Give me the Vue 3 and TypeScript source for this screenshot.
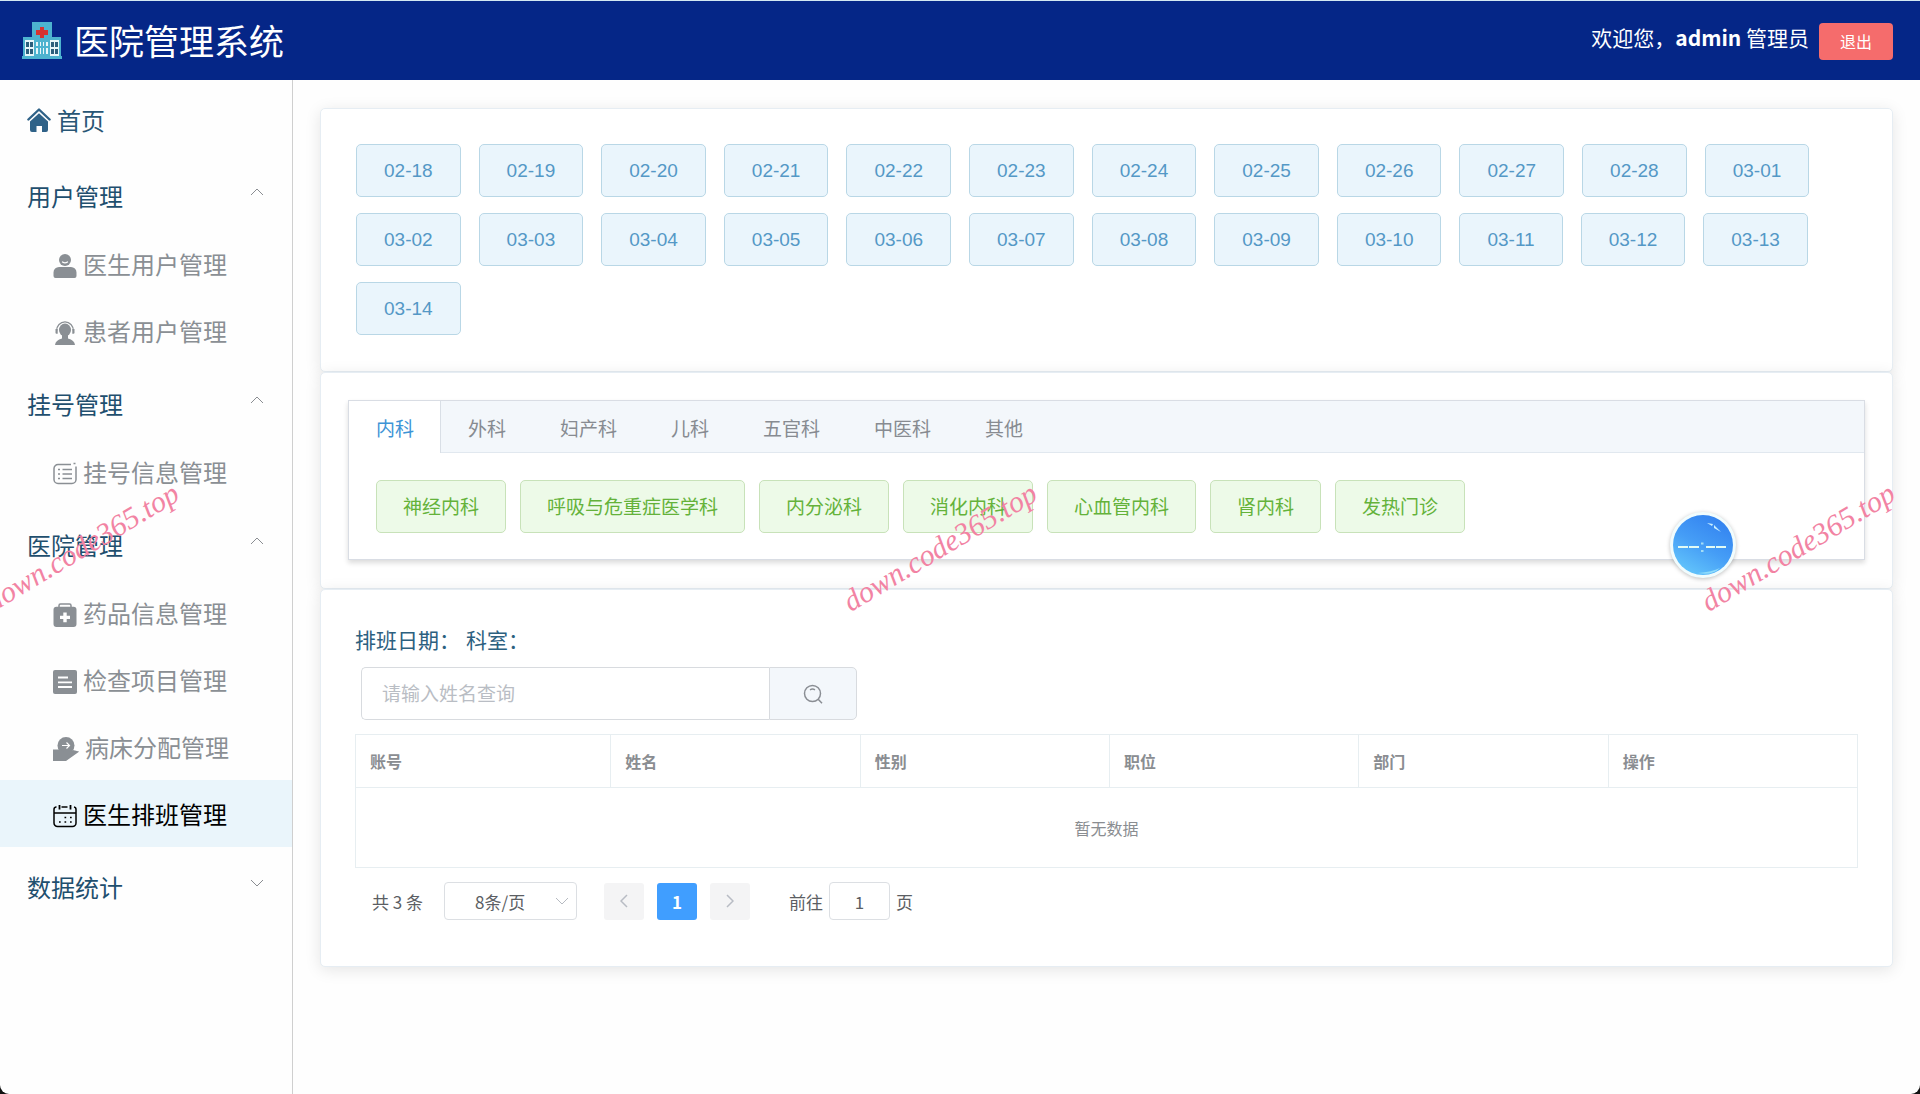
<script setup lang="ts">
import { ref } from 'vue'

interface MenuItem {
  label: string
  icon: string
  active?: boolean
}
interface MenuGroup {
  title: string
  open: boolean
  items: MenuItem[]
}

const groups = ref<MenuGroup[]>([
  {
    title: '用户管理',
    open: true,
    items: [
      { label: '医生用户管理', icon: 'doctor' },
      { label: '患者用户管理', icon: 'patient' },
    ],
  },
  { title: '挂号管理', open: true, items: [{ label: '挂号信息管理', icon: 'list' }] },
  {
    title: '医院管理',
    open: true,
    items: [
      { label: '药品信息管理', icon: 'kit' },
      { label: '检查项目管理', icon: 'check' },
      { label: '病床分配管理', icon: 'bed' },
      { label: '医生排班管理', icon: 'calendar', active: true },
    ],
  },
  { title: '数据统计', open: false, items: [] },
])

const dates: string[] = [
  '02-18', '02-19', '02-20', '02-21', '02-22', '02-23', '02-24', '02-25', '02-26',
  '02-27', '02-28', '03-01', '03-02', '03-03', '03-04', '03-05', '03-06', '03-07',
  '03-08', '03-09', '03-10', '03-11', '03-12', '03-13', '03-14',
]
const tabs: string[] = ['内科', '外科', '妇产科', '儿科', '五官科', '中医科', '其他']
const activeTab = ref('内科')
const departments: string[] = ['神经内科', '呼吸与危重症医学科', '内分泌科', '消化内科', '心血管内科', '肾内科', '发热门诊']
const columns: string[] = ['账号', '姓名', '性别', '职位', '部门', '操作']
const keyword = ref('')
const pageNo = ref('1')
</script>

<template>
  <div class="app">
    <header class="header">
      <div class="brand">
        <svg class="logo" viewBox="0 0 40 37" aria-hidden="true">
          <path fill="#4db3cf" d="M10 0h20v15h9v2H1v-2h9z" />
          <path fill="#4db3cf" d="M1 16h38v18H1zM0 34h40v3H0z" />
          <path fill="#e8f6f9" d="M3 18h9v16H3zM28 18h9v16h-9zM14 20h12v12H14z" />
          <path fill="#2c5f7c" d="M4 20h3v5H4zM8 20h3v5H8zM4 27h3v5H4zM8 27h3v5H8zM29 20h3v5h-3zM33 20h3v5h-3zM29 27h3v5h-3zM33 27h3v5h-3z" />
          <path fill="#4db3cf" d="M16 18h2v14h-2zM19 18h2v14h-2zM22 18h2v14h-2zM14 24h12v2H14z" />
          <path fill="#d63230" d="M18 5h4v3h4v5h-4v3h-4v-3h-4V8h4z" />
        </svg>
        <h1>医院管理系统</h1>
      </div>
      <div class="account">
        <span>欢迎您，<b>admin</b> 管理员</span>
        <button type="button" class="logout">退出</button>
      </div>
    </header>

    <div class="body">
      <nav class="sidebar">
        <a href="#" class="home">
          <svg class="icon" viewBox="0 0 24 24" aria-hidden="true">
            <path fill="none" stroke="#2f6288" stroke-width="2.400" stroke-linecap="round" stroke-linejoin="round" d="M1.400 11.500 12 1.500l10.600 10" />
            <path fill="#2f6288" d="M12 5.200 21 13.500V22a2 2 0 0 1-2 2h-4v-6H9.500v6H5a2 2 0 0 1-2-2v-8.500z" />
          </svg>
          <span>首页</span>
        </a>
        <section v-for="g in groups" :key="g.title">
          <button type="button" class="group" :aria-expanded="g.open" @click="g.open = !g.open">
            <span>{{ g.title }}</span>
            <svg class="chev" viewBox="0 0 14 8" aria-hidden="true">
              <path v-if="g.open" d="m1 7 6-6 6 6" />
              <path v-else d="m1 1 6 6 6-6" />
            </svg>
          </button>
          <template v-if="g.open">
            <a v-for="m in g.items" :key="m.label" href="#" class="item" :class="{ active: m.active }">
              <svg v-if="m.icon === 'doctor'" class="icon" viewBox="0 0 24 24" aria-hidden="true">
                <circle cx="12" cy="6" r="6" fill="currentColor" />
                <path fill="currentColor" d="M6 13h12a5.500 5.500 0 0 1 5.500 5.500V22a2 2 0 0 1-2 2h-19a2 2 0 0 1-2-2v-3.500A5.500 5.500 0 0 1 6 13z" />
                <path fill="none" stroke="#fff" stroke-width="1.300" stroke-linecap="round" d="M9.500 8q2.500 1.600 5 0" />
              </svg>
              <svg v-else-if="m.icon === 'patient'" class="icon" viewBox="0 0 24 24" aria-hidden="true">
                <path fill="none" stroke="currentColor" stroke-width="1.200" d="M3.500 10a8.500 9.200 0 0 1 17 0" />
                <path fill="currentColor" d="M2.500 8h2.200v4.700H3.500a1 1 0 0 1-1-1zM19.300 8h2.200v3.700a1 1 0 0 1-1 1h-1.200z" />
                <ellipse cx="12" cy="9" rx="6" ry="6.500" fill="currentColor" />
                <path fill="currentColor" d="M9 14h6v3.500q6.500 1.500 7 6.500H2q.5-5 7-6.500z" />
              </svg>
              <svg v-else-if="m.icon === 'list'" class="icon" viewBox="0 0 24 24" aria-hidden="true">
                <path fill="none" stroke="currentColor" stroke-width="1.500" d="M18 2.500H5A4 4 0 0 0 1 6.500v11a4 4 0 0 0 4 4h14a4 4 0 0 0 4-4v-13" />
                <path stroke="currentColor" stroke-width="1.500" d="M9.500 7.500H19M9.500 12H19M9.500 16.500H19M5 7.500h2M5 12h2M5 16.500h2M20.500 1.500h2" />
              </svg>
              <svg v-else-if="m.icon === 'kit'" class="icon" viewBox="0 0 24 24" aria-hidden="true">
                <path fill="none" stroke="currentColor" stroke-width="1.500" d="M6 4.500V2.500A1.500 1.500 0 0 1 7.500 1h9A1.500 1.500 0 0 1 18 2.500v2" />
                <path fill="currentColor" d="M3.500 3.800h17a3 3 0 0 1 3 3V21a3 3 0 0 1-3 3h-17a3 3 0 0 1-3-3V6.800a3 3 0 0 1 3-3z" />
                <path fill="#fff" d="M10.300 9.500h3.400v3.200H17v3.400h-3.300v3.200h-3.400v-3.200H7v-3.400h3.300z" />
              </svg>
              <svg v-else-if="m.icon === 'check'" class="icon" viewBox="0 0 24 24" aria-hidden="true">
                <rect width="24" height="24" rx="2" fill="currentColor" />
                <path fill="none" stroke="#fff" stroke-width="1.800" d="M5 7.500h10M5 12.300h14M5 17h14" />
              </svg>
              <svg v-else-if="m.icon === 'bed'" class="icon wide" viewBox="0 0 26 24" aria-hidden="true">
                <circle cx="13" cy="8.500" r="8.500" fill="currentColor" />
                <path fill="currentColor" d="M0 12.500h7q2 0 4 2.500h6l3-2 6.500 1.500L13 24H0z" />
                <path fill="none" stroke="#fff" stroke-width="1.200" d="M9 8.500h7.500M13.500 5.500l3 3-3 3" />
              </svg>
              <svg v-else class="icon" viewBox="0 0 24 24" aria-hidden="true">
                <path fill="none" stroke="currentColor" stroke-width="1.500" d="M3.500 3H3a2.500 2.500 0 0 0-2 2.500V19a3.500 3.500 0 0 0 3.500 3.500h15A3.500 3.500 0 0 0 23 19V5.500A2.500 2.500 0 0 0 21 3M8.500 3h6M1 9h22" />
                <path stroke="currentColor" stroke-width="1.800" d="M6.500 1v4.500M17.500 1v4.500" />
                <path stroke="currentColor" stroke-width="1.700" d="M11.500 13.500h1.700M17 13.500h1.700M6 18h1.700M11.500 18h1.700M17 18h1.700" />
              </svg>
              <span>{{ m.label }}</span>
            </a>
          </template>
        </section>
      </nav>

      <main class="main">
        <section class="card dates">
          <button v-for="d in dates" :key="d" type="button" class="tag date">{{ d }}</button>
        </section>

        <section class="card depts">
          <div class="tabs">
            <div class="tab-head" role="tablist">
              <button
                v-for="t in tabs"
                :key="t"
                type="button"
                role="tab"
                class="tab"
                :class="{ on: t === activeTab }"
                :aria-selected="t === activeTab"
                @click="activeTab = t"
              >{{ t }}</button>
            </div>
            <div class="tab-body">
              <button v-for="d in departments" :key="d" type="button" class="tag dept">{{ d }}</button>
            </div>
          </div>
        </section>

        <section class="card schedule">
          <p class="summary"><span>排班日期：</span><span>科室：</span></p>
          <form class="search" @submit.prevent>
            <input v-model="keyword" type="text" aria-label="姓名" placeholder="请输入姓名查询" />
            <button type="submit" aria-label="查询">
              <svg viewBox="0 0 20 20" aria-hidden="true">
                <circle cx="9.500" cy="9.500" r="8" />
                <path d="m15.200 15.200 3.800 4M7 5.800q2.500-1.400 5 0" />
              </svg>
            </button>
          </form>
          <table>
            <thead>
              <tr><th v-for="c in columns" :key="c" scope="col">{{ c }}</th></tr>
            </thead>
            <tbody>
              <tr><td :colspan="columns.length">暂无数据</td></tr>
            </tbody>
          </table>
          <div class="pager">
            <span>共 3 条</span>
            <div class="size">
              <select aria-label="每页条数">
                <option>8条/页</option>
              </select>
              <svg class="chev" viewBox="0 0 14 8" aria-hidden="true"><path d="m1 1 6 6 6-6" /></svg>
            </div>
            <div class="pages">
              <button type="button" aria-label="上一页" disabled>
                <svg viewBox="0 0 8 14" aria-hidden="true"><path d="M7 1 1 7l6 6" /></svg>
              </button>
              <button type="button" class="current">1</button>
              <button type="button" aria-label="下一页" disabled>
                <svg viewBox="0 0 8 14" aria-hidden="true"><path d="m1 1 6 6-6 6" /></svg>
              </button>
            </div>
            <label class="jump">前往<input v-model="pageNo" type="text" />页</label>
          </div>
        </section>
      </main>
    </div>

    <div class="clock">
      <svg viewBox="0 0 60 60" aria-hidden="true">
        <defs>
          <linearGradient id="ball" x1="0.8" y1="0.1" x2="0.3" y2="1">
            <stop offset="0" stop-color="#3484f0" />
            <stop offset="0.5" stop-color="#459df6" />
            <stop offset="1" stop-color="#62c4fb" />
          </linearGradient>
        </defs>
        <circle cx="30" cy="30" r="30" fill="url(#ball)" />
        <path fill="#8fdcfb" d="M25 58q14-1 22-5-8 8-22 5z" />
        <path fill="#c9f0ff" d="m34 8 6 1-1 2zM41 10l7 7-7-4z" />
        <path fill="none" stroke="#e2fbf4" stroke-width="2.200" d="M5 32h10M16 32h10M33 32h9M43 32h10" />
        <path stroke="#a5ddf5" stroke-width="2" d="M28 28.500h2.500M28 36h2.500" />
      </svg>
    </div>
    <div class="marks" aria-hidden="true">
      <span>down.code365.top</span>
      <span>down.code365.top</span>
      <span>down.code365.top</span>
    </div>
  </div>
</template>

<style>
body {
  margin: 0;
  background: #111;
}
</style>

<style scoped>
.app {
  position: relative;
  display: flex;
  flex-direction: column;
  box-sizing: border-box;
  min-height: 100vh;
  overflow: hidden;
  background: #fefefe;
  border-top: 1px solid #d3e8f2;
  border-radius: 0 0 9px 9px;
  font-family: "Noto Sans CJK SC", sans-serif;
}
button,
input,
select {
  box-sizing: border-box;
  margin: 0;
  font-family: inherit;
}
a {
  text-decoration: none;
}
.header {
  display: flex;
  justify-content: space-between;
  height: 79px;
  padding: 0 27px 0 22px;
  background: #052687;
  color: #fff;
}
.brand,
.account {
  display: flex;
  align-items: center;
}
.brand {
  gap: 12px;
}
.logo {
  width: 40px;
  height: 37px;
}
.brand h1 {
  margin: 0;
  padding-bottom: 2px;
  font-size: 35px;
  font-weight: 400;
  line-height: 48px;
}
.account {
  gap: 10px;
  padding-top: 2px;
  font-size: 21px;
}
.account span {
  padding-bottom: 10px;
}
.logout {
  width: 74px;
  height: 37px;
  padding: 0 0 2px;
  border: 0;
  border-radius: 4px;
  background: #f56c6c;
  color: #fff;
  font-size: 16px;
}
.body {
  display: flex;
  flex: 1;
}
.sidebar {
  flex: none;
  width: 292px;
  border-right: 1px solid #cfcfcf;
  font-size: 24px;
}
.home {
  display: flex;
  align-items: center;
  gap: 6px;
  box-sizing: border-box;
  height: 76px;
  padding: 4px 27px 0;
  color: #285675;
}
.home span {
  padding-bottom: 2px;
}
.icon {
  flex: none;
  width: 24px;
  height: 24px;
}
.icon.wide {
  width: 26px;
}
.group {
  display: flex;
  align-items: center;
  justify-content: space-between;
  width: 100%;
  height: 74px;
  padding: 0 28px 2px 27px;
  border: 0;
  background: none;
  color: #1f4f6e;
  font-size: 24px;
}
.group span {
  padding-top: 6px;
}
.chev {
  width: 14px;
  height: 8px;
  fill: none;
  stroke: #8a8d92;
  stroke-width: 1;
}
.item {
  display: flex;
  align-items: center;
  gap: 6px;
  box-sizing: border-box;
  height: 67px;
  padding: 4px 0 0 53px;
  color: #8a8f94;
}
.item span {
  padding-bottom: 4px;
}
.item.active {
  background: #eaf5fb;
  color: #000;
}
.main {
  flex: 1;
  min-width: 0;
  padding: 28px 27px;
}
.card {
  border: 1px solid #e6edf3;
  border-radius: 5px;
  background: #fff;
  box-shadow: 0 3px 16px rgba(0, 0, 0, 0.1);
}
.dates {
  display: flex;
  flex-wrap: wrap;
  gap: 16px 18px;
  padding: 35px 35px 36px;
}
.tag {
  height: 53px;
  border: 1px solid;
  border-radius: 5px;
  font-size: 19px;
}
.date {
  padding: 0 27px;
  border-color: #b9d7e6;
  background: #eaf5fc;
  color: #5498c6;
  font-family: "Liberation Sans", sans-serif;
}
.depts {
  padding: 27px 27px 28px;
}
.tabs {
  border: 1px solid #d9dde4;
  background: #fff;
  box-shadow: 0 3px 5px rgba(0, 0, 0, 0.14);
}
.tab-head {
  display: flex;
  background: #f3f7fb;
  border-bottom: 1px solid #e1e8ef;
}
.tab {
  height: 52px;
  margin-bottom: -1px;
  padding: 0 27px;
  border: 0;
  background: none;
  color: #878b91;
  font-size: 19px;
}
.tab.on {
  padding-right: 26px;
  border-right: 1px solid #d9dfe6;
  background: #fff;
  color: #3d94d6;
}
.tab-body {
  display: flex;
  flex-wrap: wrap;
  gap: 14px;
  padding: 27px 27px 26px;
}
.dept {
  padding: 0 26px 3px;
  border-color: #c8e2b9;
  background: #edfae8;
  color: #64b23a;
}
.schedule {
  padding: 33px 34px 46px;
}
.summary {
  display: flex;
  gap: 6px;
  margin: 0 0 12px;
  color: #2c607f;
  font-size: 21px;
  line-height: 32px;
}
.search {
  display: flex;
  width: 496px;
  margin: 0 0 14px 6px;
}
.search input {
  flex: 1;
  min-width: 0;
  height: 53px;
  padding: 0 20px 2px;
  border: 1px solid #d8dbdf;
  border-right: 0;
  border-radius: 5px 0 0 5px;
  background: #fff;
  font-size: 19px;
}
.search input::placeholder {
  color: #b9bdc4;
  opacity: 1;
}
.search button {
  display: flex;
  align-items: center;
  justify-content: center;
  width: 88px;
  height: 53px;
  padding: 0;
  border: 1px solid #d8dbdf;
  border-radius: 0 5px 5px 0;
  background: #f3f7fb;
}
.search svg {
  width: 20px;
  height: 20px;
  fill: none;
  stroke: #8a8e94;
  stroke-width: 1.5;
}
table {
  width: 100%;
  table-layout: fixed;
  border-collapse: collapse;
  font-size: 16px;
}
th,
td {
  box-sizing: border-box;
  border: 1px solid #e7eef1;
}
th {
  height: 53px;
  padding: 0 14px;
  color: #8a8d91;
  font-weight: 700;
  text-align: left;
}
th:first-child {
  width: 17%;
}
td {
  height: 80px;
  padding: 0;
  color: #8a8d91;
  text-align: center;
}
.pager {
  display: flex;
  align-items: center;
  margin-top: 14px;
  padding-left: 17px;
  color: #5b5e63;
  font-size: 17px;
}
.size {
  display: grid;
  grid-template-columns: 1fr 30px;
  align-items: center;
  width: 133px;
  margin-left: 21px;
}
.size select {
  grid-area: 1 / 1 / 2 / 3;
  height: 38px;
  padding: 0 30px;
  border: 1px solid #dcdfe3;
  border-radius: 4px;
  appearance: none;
  background: #fff;
  color: #5b5e63;
  font-size: 17px;
}
.size .chev {
  grid-area: 1 / 2 / 2 / 3;
  justify-self: center;
  stroke: #b6bac1;
  pointer-events: none;
}
.pages {
  display: flex;
  gap: 13px;
  margin: 0 39px 0 27px;
}
.pages button {
  display: flex;
  align-items: center;
  justify-content: center;
  width: 40px;
  height: 37px;
  padding: 0;
  border: 0;
  border-radius: 3px;
  background: #f4f4f5;
  color: #fff;
  font-size: 17px;
  font-weight: 700;
}
.pages .current {
  background: #409eff;
}
.pages svg {
  width: 8px;
  height: 14px;
  fill: none;
  stroke: #b8bcc4;
  stroke-width: 1.5;
}
.jump input {
  width: 61px;
  height: 38px;
  margin: 0 6px;
  padding: 0;
  border: 1px solid #dcdfe3;
  border-radius: 4px;
  background: #fff;
  color: #5b5e63;
  font-size: 17px;
  text-align: center;
}
.clock {
  position: absolute;
  top: 511px;
  right: 184px;
  width: 60px;
  height: 60px;
  border: 3px solid #f1fcfd;
  border-radius: 50%;
  background: #f1fcfd;
  box-shadow: 0 1px 4px rgba(0, 0, 0, 0.25);
}
.clock svg {
  display: block;
}
.marks {
  position: absolute;
  top: 528px;
  right: 12px;
  left: -28px;
  display: flex;
  justify-content: space-between;
  color: #f283a3;
  font: italic 30px/36px "Liberation Serif", serif;
  pointer-events: none;
}
.marks span {
  transform: rotate(-31deg);
}
</style>
